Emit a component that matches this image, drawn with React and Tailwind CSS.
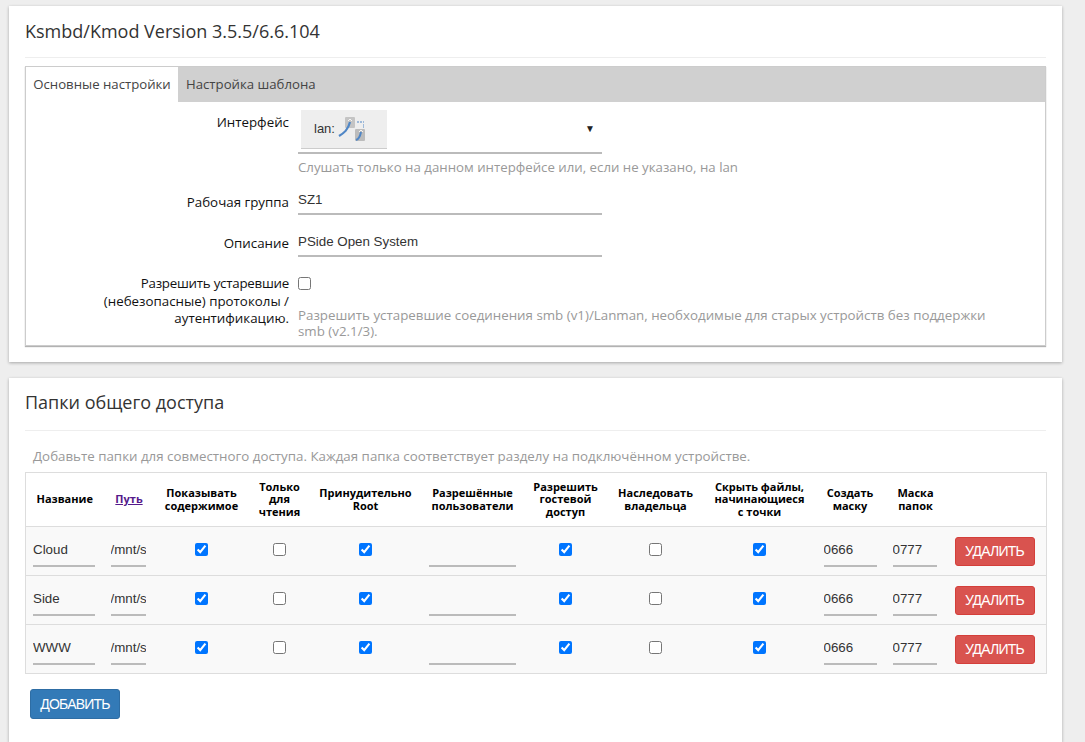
const sans = "font-['Open_Sans',sans-serif]";

const shares = [
  { name: "Cloud" },
  { name: "Side" },
  { name: "WWW" },
];

const colWidths = [78, 51, 94, 62, 110, 104, 82, 98, 110, 71, 60, 101];

const headers = [
  ["Название"],
  null,
  ["Показывать", "содержимое"],
  ["Только", "для", "чтения"],
  ["Принудительно", "Root"],
  ["Разрешённые", "пользователи"],
  ["Разрешить", "гостевой", "доступ"],
  ["Наследовать", "владельца"],
  ["Скрыть файлы,", "начинающиеся", "с точки"],
  ["Создать", "маску"],
  ["Маска", "папок"],
  [],
];

function LanIcon() {
  return (
    <svg width="28" height="24" viewBox="0 0 28 24" className="ml-[2px] shrink-0">
      <rect x="8" y="0" width="10" height="11" rx="1" fill="#c4c4c4" />
      <rect x="18" y="12" width="10" height="12" rx="1" fill="#bcbcbc" />
      <path d="M2 19 C7 16 11 13 13 5" stroke="#4f86c6" strokeWidth="2.2" fill="none" />
      <path d="M11 4l2-2 2 2" stroke="#f4f4f4" strokeWidth="1" fill="none" />
      <path d="M19 23 C22 22 23 20 24 15" stroke="#4f86c6" strokeWidth="2" fill="none" />
      <path d="M22 15l2-2 2 2" stroke="#f4f4f4" strokeWidth="1" fill="none" />
      <path d="M20 5h2M23 5h2" stroke="#4f86c6" strokeWidth="1.2" fill="none" />
      <path d="M26 5h1M26 8h1M26 10h1" stroke="#4f86c6" strokeWidth="1.2" fill="none" />
    </svg>
  );
}

function TextInput({ value, className }) {
  return (
    <input
      defaultValue={value}
      className={`h-[25px] border-b-2 border-[#bbb] bg-transparent font-['Liberation_Sans',sans-serif] text-[13.33px] text-[#333] outline-none ${className}`}
    />
  );
}

function FormRow({ label, children, className = "", labelClass = "pt-[3px]" }) {
  return (
    <div className={`flex ${className}`}>
      <div className={`w-[263px] shrink-0 text-right text-[13.33px] leading-[17.5px] text-[#111] ${labelClass}`}>{label}</div>
      <div className="ml-[9px] w-[690px]">{children}</div>
    </div>
  );
}

function Check({ checked = false }) {
  return <input type="checkbox" defaultChecked={checked} className="m-0 block h-[13px] w-[13px]" />;
}

function CheckCell({ checked }) {
  return (
    <td className="px-2 pb-[3px] align-middle">
      <div className="flex justify-center">
        <Check checked={checked} />
      </div>
    </td>
  );
}

function ShareRow({ name }) {
  return (
    <tr className="h-[49px] border-t border-[#ddd] bg-[#f9f9f9]">
      <td className="pt-[1px] pr-2 pl-[7px]">
        <TextInput value={name} className="w-[62px] pb-[7px]" />
      </td>
      <td className="pt-[1px] pr-2 pl-[7px]">
        <TextInput value="/mnt/sda1/share" className="w-[35px] pb-[7px]" />
      </td>
      <CheckCell checked />
      <CheckCell />
      <CheckCell checked />
      <td className="px-2 pt-[1px]">
        <TextInput value="" className="w-[87px] pb-[7px]" />
      </td>
      <CheckCell checked />
      <CheckCell />
      <CheckCell checked />
      <td className="pt-[1px] pr-2 pl-[9px]">
        <TextInput value="0666" className="w-[53px] pb-[7px]" />
      </td>
      <td className="pt-[1px] pr-2 pl-[7px]">
        <TextInput value="0777" className="w-[44px] pb-[7px]" />
      </td>
      <td className="pt-[1px] pl-[9px]">
        <button className="block h-[29px] w-[80px] rounded-[3px] border border-[#d43f3a] bg-[#d9534f] font-['Liberation_Sans',sans-serif] text-[14px] tracking-[-0.8px] text-white">
          УДАЛИТЬ
        </button>
      </td>
    </tr>
  );
}

export default function App() {
  return (
    <div className={`flex h-[742px] flex-col gap-4 overflow-hidden bg-[#eee] pt-[6px] pr-[23px] pl-[9px] ${sans}`}>
      <section className="h-[356px] shrink-0 bg-white px-4 shadow-[0_1px_3px_rgba(0,0,0,0.3)]">
        <h3 className="flex h-[52px] items-center border-b border-[#eee] pt-[1px] pb-[1px] text-[18px] text-[#333]">
          Ksmbd/Kmod Version 3.5.5/6.6.104
        </h3>
        <div className="mt-[8px] h-[280px] border border-[#ccc] shadow-[0_1px_1px_rgba(0,0,0,0.3)]">
          <div className="flex h-[35px] bg-[#d0d0d0] text-[13.2px]">
            <div className="flex w-[152px] items-center justify-center bg-white pt-[1px] text-[#444]">Основные настройки</div>
            <div className="flex items-center pt-[1px] pl-2 text-[#444]">Настройка шаблона</div>
          </div>
          <FormRow label="Интерфейс" className="pt-[8px]" labelClass="pt-[4px]">
            <div className="flex h-[44px] w-[304px] items-start justify-between border-b-2 border-[#bbb]">
              <div className="ml-[3px] flex h-[39px] w-[86px] items-center border-b border-[#ccc] bg-[#eee] pb-[1px] pl-[13px] font-['Liberation_Sans',sans-serif] text-[13px] text-[#333]">
                lan:
                <LanIcon />
              </div>
              <span className="mt-[11px] mr-[7px] text-[10px] text-[#222]">▼</span>
            </div>
            <div className="mt-[4px] text-[13.25px] leading-[18px] text-[#999]">
              Слушать только на данном интерфейсе или, если не указано, на lan
            </div>
          </FormRow>
          <FormRow label="Рабочая группа" className="pt-[14px]" labelClass="pt-[4px]">
            <TextInput value="SZ1" className="block w-[304px] pb-[4px]" />
          </FormRow>
          <FormRow label="Описание" className="pt-[17px]">
            <TextInput value="PSide Open System" className="block w-[304px] pb-[4px]" />
          </FormRow>
          <FormRow
            label={<><span className="tracking-[-0.25px]">Разрешить устаревшие</span><br />(небезопасные) протоколы /<br />аутентификацию.</>}
            className="pt-[15px]"
          >
            <div className="pt-[5px]">
              <Check />
            </div>
            <div className="mt-[17px] text-[13.33px] leading-[16px] text-[#999]">
              Разрешить устаревшие соединения smb (v1)/Lanman, необходимые для старых устройств без поддержки smb (v2.1/3).
            </div>
          </FormRow>
        </div>
      </section>

      <section className="flex-1 bg-white px-4 shadow-[0_1px_3px_rgba(0,0,0,0.3)]">
        <h3 className="flex h-[53px] items-center border-b border-[#eee] pb-[3px] text-[18px] text-[#333]">Папки общего доступа</h3>
        <p className="mt-[16px] ml-2 text-[13.33px] leading-[18px] text-[#999]">
          Добавьте папки для совместного доступа. Каждая папка соответствует разделу на подключённом устройстве.
        </p>
        <table className="mt-[7px] w-[1022px] table-fixed border-collapse border border-[#ddd]">
          <colgroup>
            {colWidths.map((w, i) => (
              <col key={i} width={w} />
            ))}
          </colgroup>
          <thead>
            <tr className="h-[54px]">
              {headers.map((lines, i) => (
                <th key={i} className="text-center align-middle text-[11px] leading-[12.5px] font-bold text-black">
                  {lines === null ? (
                    <a href="#" className="text-[#551a8b] underline">Путь</a>
                  ) : (
                    lines.map((l) => <div key={l}>{l}</div>)
                  )}
                </th>
              ))}
            </tr>
          </thead>
          <tbody>
            {shares.map((s) => (
              <ShareRow key={s.name} name={s.name} />
            ))}
          </tbody>
        </table>
        <button className="mt-[15px] ml-[5px] block h-[30px] w-[90px] rounded-[3px] border border-[#2e6da4] bg-[#337ab7] font-['Liberation_Sans',sans-serif] text-[14px] tracking-[-0.8px] text-white">
          ДОБАВИТЬ
        </button>
      </section>
    </div>
  );
}
